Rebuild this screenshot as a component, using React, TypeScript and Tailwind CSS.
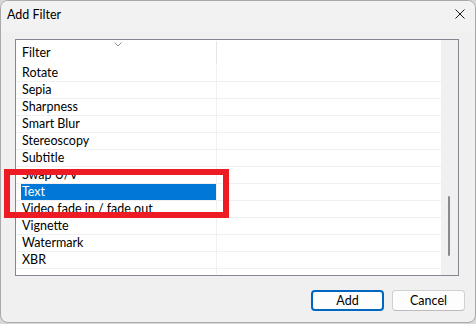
const ROWS = [
  "Rotate",
  "Sepia",
  "Sharpness",
  "Smart Blur",
  "Stereoscopy",
  "Subtitle",
  "Swap U/V",
  "Text",
  "Video fade in / fade out",
  "Vignette",
  "Watermark",
  "XBR",
];

const SELECTED = "Text";

export default function App() {
  return (
    <div className="w-[476px] h-[324px] bg-[#d8d8d8] font-['Segoe_UI','Lato',sans-serif] text-[12.5px] text-black">
      {/* dialog window */}
      <div className="relative w-[476px] h-[323px] bg-[#f0f0f0] border border-[#a9a9a9] rounded-[8px] flex flex-col overflow-hidden">
        {/* title bar */}
        <div className="h-[30px] shrink-0 flex items-center justify-between pl-[6px] pr-[10px] bg-[#f2f2f2]">
          <span className="leading-none -mt-[1px]">Add Filter</span>
          <svg width="10" height="10" viewBox="0 0 10 10" className="-mt-[4px]">
            <path d="M0.5 0.5 L9.5 9.5 M9.5 0.5 L0.5 9.5" stroke="#1a1a1a" strokeWidth="1" />
          </svg>
        </div>

        {/* list view */}
        <div className="ml-[14px] mt-[8px] w-[444px] h-[237px] shrink-0 border border-[#828790] bg-white flex">
          <div className="w-[425px] flex flex-col">
            {/* header */}
            <div className="relative h-[25px] flex shrink-0">
              <div className="w-[200px] pl-[6px] flex items-center pt-[2px]">Filter</div>
              <div className="w-px my-[1px] h-[23px] bg-[#e5e5e5]" />
              <svg width="8" height="5" viewBox="0 0 8 5" className="absolute left-[98px] top-[2px]">
                <path d="M0.5 0.5 L4 4 L7.5 0.5" stroke="#8f8f8f" strokeWidth="1" fill="none" />
              </svg>
            </div>
            {/* rows */}
            {ROWS.map((r) => (
              <div key={r} className="h-[17px] flex border-b border-[#f0f0f0] shrink-0">
                <div className="w-[201px] h-[16px] pl-[5px] border-r border-[#f0f0f0] flex">
                  <div
                    className={
                      r === SELECTED
                        ? "flex-1 bg-[#0078d7] text-white pl-[1px] pt-[1px] flex items-center whitespace-nowrap"
                        : "flex-1 pl-[1px] pt-[1px] flex items-center whitespace-nowrap"
                    }
                  >
                    {r}
                  </div>
                </div>
              </div>
            ))}
            <div className="flex-1 flex">
              <div className="w-[201px] h-[5px] border-r border-[#f0f0f0]" />
            </div>
          </div>
          {/* scrollbar */}
          <div className="w-[17px] bg-[#f0f0f0] relative">
            <div className="absolute left-[7px] top-[156px] w-[2px] h-[60px] bg-[#8a8a8a] rounded-full" />
          </div>
        </div>

        {/* buttons */}
        <div className="mt-[14px] flex justify-end gap-[8px] pr-[10px]">
          <button className="w-[73px] h-[21px] rounded-[4px] border-2 border-[#0067c0] bg-[#fdfdfd] flex items-center justify-center leading-none pt-[1px]">
            Add
          </button>
          <button className="w-[73px] h-[21px] rounded-[4px] border border-[#d0d0d0] border-b-[#bcbcbc] bg-[#fdfdfd] flex items-center justify-center leading-none pt-[1px]">
            Cancel
          </button>
        </div>

        {/* red annotation box */}
        <div className="absolute left-[3px] top-[168px] w-[225px] h-[49px] border-[6px] border-[#ed1c24]" />
      </div>
    </div>
  );
}
